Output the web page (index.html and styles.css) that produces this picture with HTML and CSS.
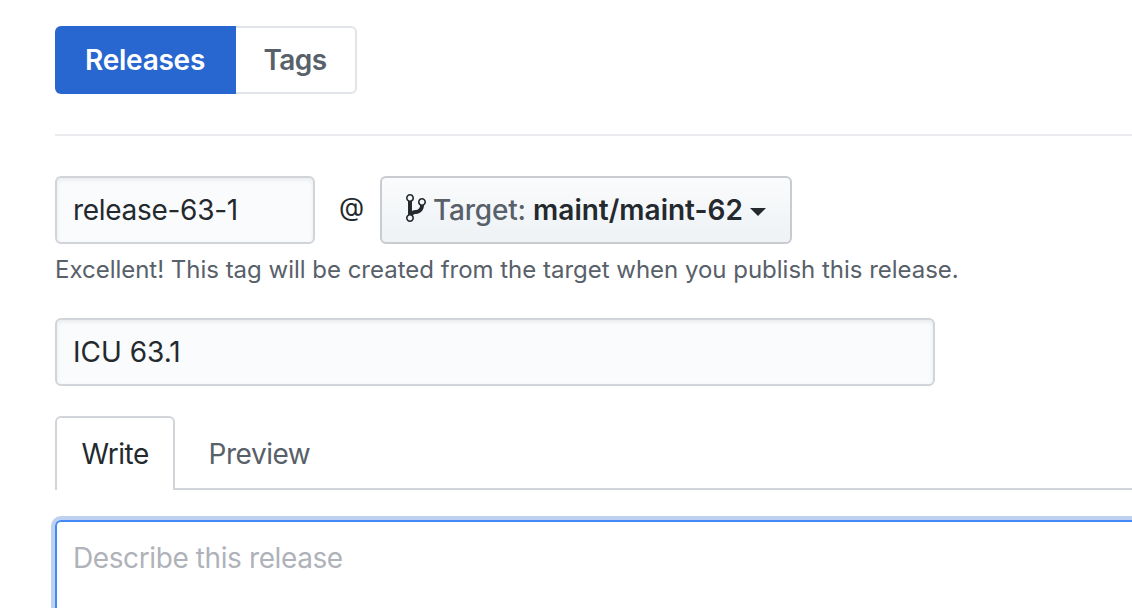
FILE: index.html
```html
<!DOCTYPE html>
<html lang="en">
<head>
<meta charset="utf-8">
<title>New release</title>
<link rel="stylesheet" href="styles.css">
</head>
<body>
<main class="page">
  <nav class="subnav">
    <a class="subnav-item selected">Releases</a>
    <a class="subnav-item">Tags</a>
  </nav>
  <form class="release-form">
    <div class="tag-row">
      <div class="field tag-field">release-63-1</div>
      <span class="at">@</span>
      <button class="target" type="button">
        <svg class="branch" viewBox="0 0 10 16" width="20" height="32" aria-hidden="true"><path fill-rule="evenodd" d="M10 5c0-1.110-.89-2-2-2a1.993 1.993 0 0 0-1 3.720v.3c-.02.52-.23.98-.63 1.380-.4.4-.86.61-1.380.63-.83.02-1.480.16-2 .45V4.720a1.993 1.993 0 0 0-1-3.720C.88 1 0 1.890 0 3a2 2 0 0 0 1 1.720v6.560c-.59.35-1 .99-1 1.720 0 1.110.89 2 2 2 1.110 0 2-.89 2-2 0-.53-.2-1-.53-1.360.09-.06.48-.41.59-.47.25-.11.56-.17.94-.17 1.050-.05 1.950-.45 2.750-1.250S8.950 7.770 9 6.730h-.02C9.590 6.370 10 5.730 10 5zM2 1.800c.66 0 1.200.55 1.200 1.200 0 .65-.55 1.200-1.200 1.200C1.350 4.200.8 3.650.8 3c0-.65.55-1.200 1.200-1.200zm0 12.410c-.66 0-1.200-.55-1.200-1.200 0-.65.55-1.200 1.200-1.200.65 0 1.200.55 1.200 1.200 0 .65-.55 1.200-1.200 1.200zm6-8c-.66 0-1.200-.55-1.200-1.200 0-.65.55-1.200 1.200-1.200.65 0 1.200.55 1.200 1.200 0 .65-.55 1.200-1.200 1.200z"/></svg>
        <span class="target-label">Target:</span>
        <span class="target-name">maint/maint-62</span>
        <span class="caret"></span>
      </button>
    </div>
    <p class="note">Excellent! This tag will be created from the target when you publish this release.</p>
    <div class="field title-field">ICU 63.1</div>
    <div class="tabs">
      <a class="tab active">Write</a>
      <a class="tab">Preview</a>
    </div>
    <div class="editor">Describe this release</div>
  </form>
</main>
</body>
</html>
```
FILE: styles.css
```css
* { box-sizing: border-box; }
body {
  margin: 0;
  background: #fff;
  color: #24292e;
  font: 400 28px/42px Inter, "Liberation Sans", sans-serif;
  white-space: nowrap;
}
.page {
  height: 608px;
  padding: 26px 0 0 55px;
  overflow: hidden;
}
.subnav {
  display: flex;
  height: 110px;
  align-items: flex-start;
  border-bottom: 2px solid #eaecef;
}
.subnav-item {
  display: flex;
  align-items: center;
  height: 68px;
  width: 121px;
  padding-left: 27.5px;
  border: 2px solid #e1e4e8;
  border-left: 0;
  border-radius: 0 6px 6px 0;
  color: #586069;
  font-weight: 600;
  letter-spacing: -0.6px;
}
.subnav-item.selected {
  width: 181px;
  padding-left: 30px;
  border: 0;
  border-radius: 6px 0 0 6px;
  background: #2866d0;
  color: #fff;
  letter-spacing: -0.25px;
}
.release-form { padding-top: 40px; }
.tag-row { display: flex; align-items: center; }
.field {
  display: flex;
  align-items: center;
  height: 68px;
  padding-left: 16px;
  border: 2px solid #d1d5da;
  border-radius: 6px;
  background: #fafbfc;
  box-shadow: inset 0 2px 4px rgba(27, 31, 35, 0.075);
}
.tag-field { width: 260px; letter-spacing: -0.3px; }
.at {
  width: 65px;
  padding: 0 0 6px 8px;
  text-align: center;
  font-size: 26px;
}
.target {
  display: flex;
  align-items: center;
  width: 412px;
  height: 68px;
  padding: 0 0 0 24px;
  border: 2px solid #c8cbcf;
  border-radius: 6px;
  background: linear-gradient(#fafbfc, #eff3f6 90%);
  color: #24292e;
  font: inherit;
}
.branch { fill: currentColor; flex: none; margin-bottom: 4px; }
.target-label {
  flex: none;
  width: 99px;
  margin-right: 7px;
  padding-left: 7px;
  color: #586069;
  font-weight: 500;
  letter-spacing: -0.2px;
}
.target-name { width: 212px; font-weight: 600; flex: none; }
.caret {
  margin: 3px 0 0 6px;
  border: 8px solid transparent;
  border-top-color: currentColor;
  border-bottom: 0;
}
.note {
  margin: 8px 0 30px;
  color: #586069;
  font-size: 24px;
  line-height: 36px;
  letter-spacing: -0.015px;
}
.title-field { width: 880px; }
.tabs {
  display: flex;
  height: 74px;
  margin-top: 30px;
  border-bottom: 2px solid #d1d5da;
}
.tab {
  height: 74px;
  padding: 17px 0 0 33.5px;
  color: #586069;
  letter-spacing: -0.45px;
}
.tab.active {
  width: 120px;
  padding: 15px 0 0 24.5px;
  border: 2px solid #d1d5da;
  border-bottom: 0;
  border-radius: 6px 6px 0 0;
  background: #fff;
  color: #24292e;
}
.editor {
  height: 88px;
  margin-top: 30px;
  padding: 15px 16px;
  border: 2px solid #4489f7;
  border-width: 2px 0 0 2px;
  border-radius: 6px 0 0 0;
  box-shadow: 0 0 0 4px #bed1f1;
  color: #afb3b9;
  letter-spacing: -0.4px;
}
```
